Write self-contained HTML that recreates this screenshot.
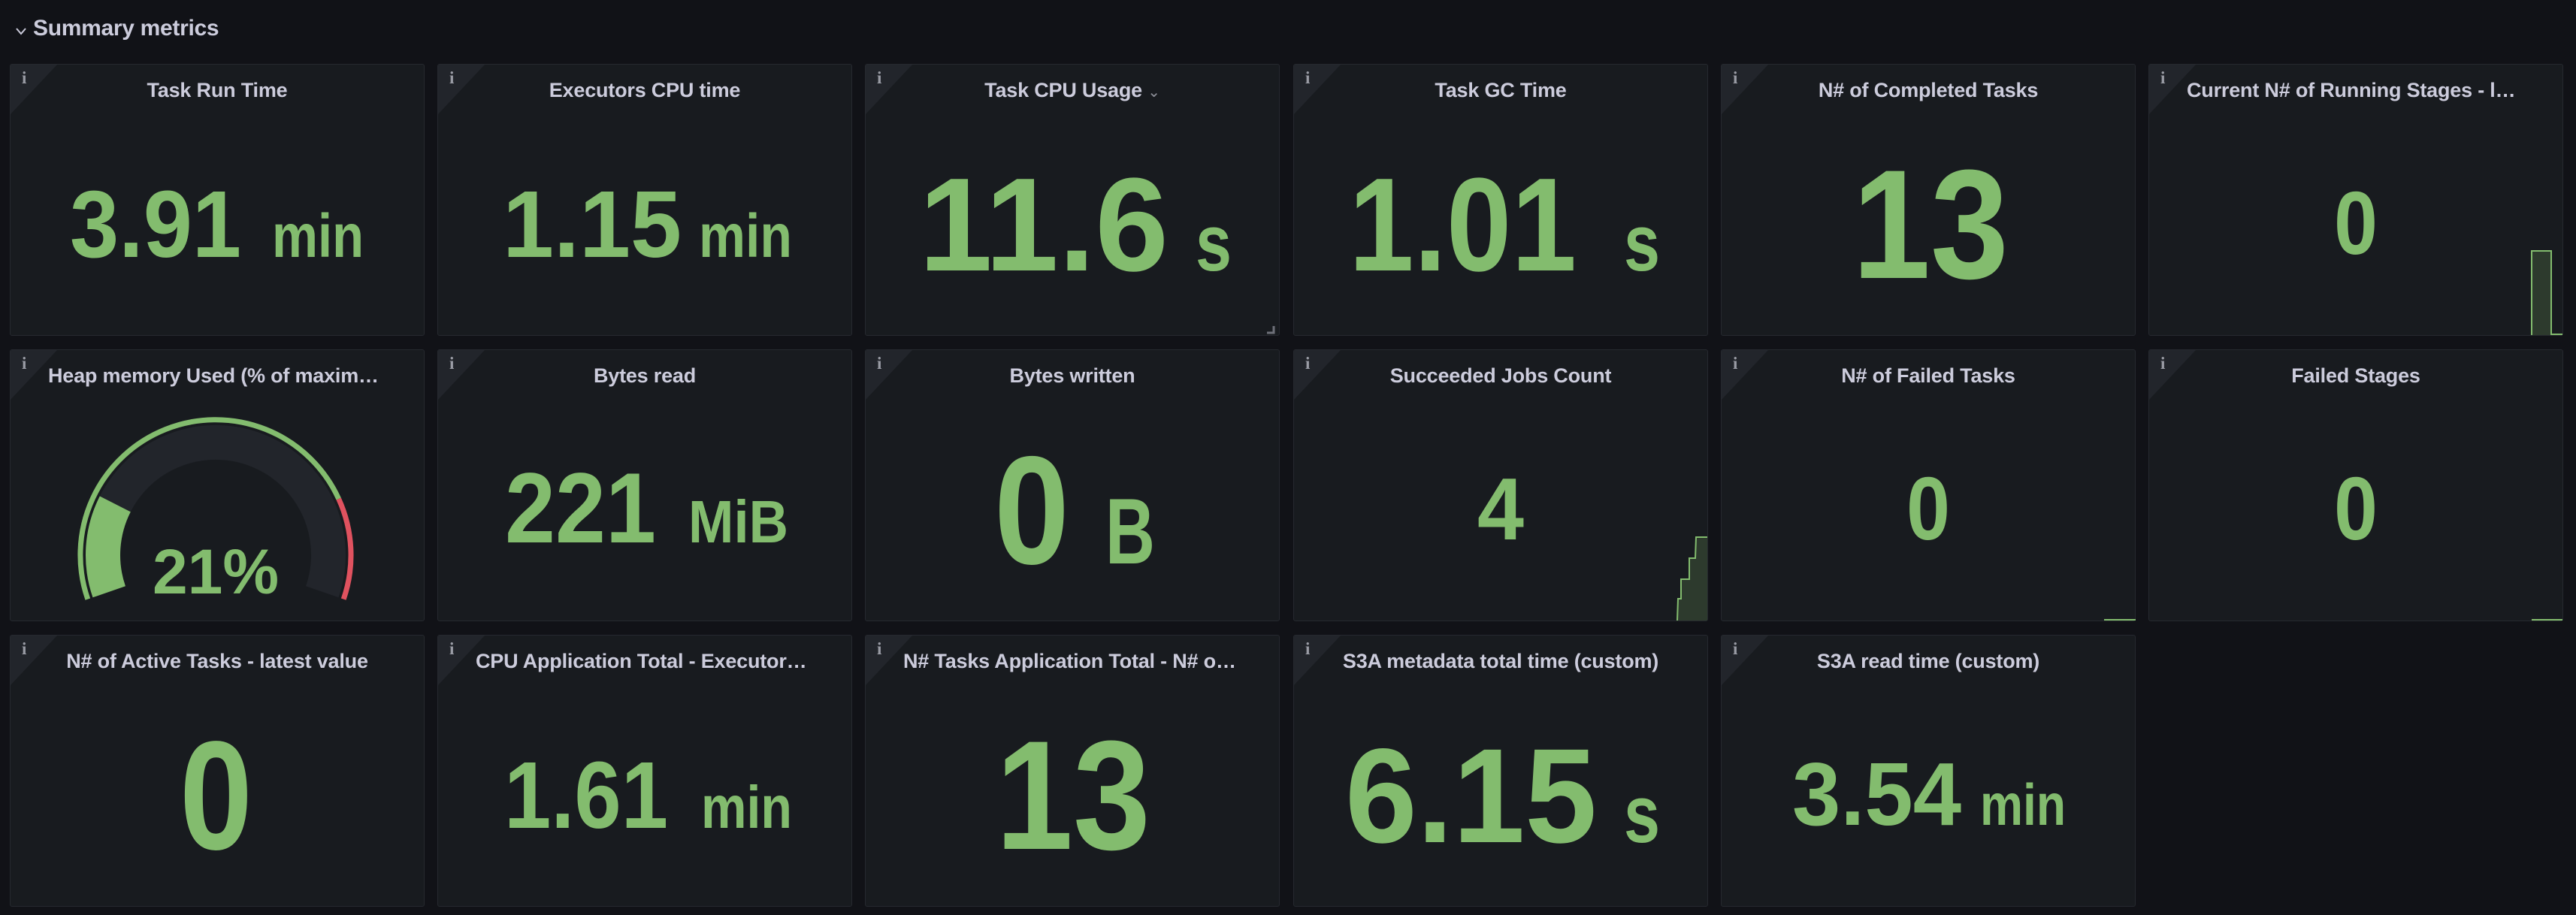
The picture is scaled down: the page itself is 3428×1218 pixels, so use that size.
<!DOCTYPE html>
<html><head><meta charset="utf-8">
<style>
*{box-sizing:border-box;margin:0;padding:0}
html,body{width:3428px;height:1218px;background:#111217;overflow:hidden;font-family:"Liberation Sans",sans-serif}
.hdr{position:absolute;left:44px;top:18px;font-size:30px;font-weight:bold;color:#ccccdc;line-height:40px;letter-spacing:-0.3px}
.p{position:absolute;width:552px;height:362px;background:#181b1f;border:1px solid #26292f;border-radius:3px;overflow:hidden}
.tri{position:absolute;left:0;top:0;width:62px;height:66px;background:#22252b;clip-path:polygon(0 0,100% 0,0 100%)}
.i{position:absolute;left:15px;top:5px;font-family:"Liberation Serif",serif;font-weight:bold;font-size:23px;color:#9a9ca5}
.t{position:absolute;left:50px;right:50px;top:17px;line-height:34px;font-size:27px;font-weight:600;color:#ccccdc;text-align:center;white-space:nowrap;overflow:hidden;text-overflow:ellipsis;letter-spacing:-0.2px}
svg.o{position:absolute;left:0;top:0}
svg.o text{font-family:"Liberation Sans",sans-serif;font-weight:bold;fill:#83bc6e}
</style></head><body>
<svg style="position:absolute;left:20px;top:36px" width="16" height="12" viewBox="0 0 16 12"><path d="M2 2 L8 9 L14 2" fill="none" stroke="#ccccdc" stroke-width="2"/></svg>
<div class="hdr">Summary metrics</div>

<div class="p" style="left:13px;top:85px"><div class="tri"></div><div class="i">i</div><div class="t">Task Run Time</div></div>
<div class="p" style="left:582px;top:85px"><div class="tri"></div><div class="i">i</div><div class="t">Executors CPU time</div></div>
<div class="p" style="left:1151px;top:85px"><div class="tri"></div><div class="i">i</div><div class="t" style="left:40px;right:40px">Task CPU Usage <span style="font-size:20px;color:#8e9099;font-weight:normal">&#8964;</span></div></div>
<div class="p" style="left:1721px;top:85px"><div class="tri"></div><div class="i">i</div><div class="t">Task GC Time</div></div>
<div class="p" style="left:2290px;top:85px"><div class="tri"></div><div class="i">i</div><div class="t">N# of Completed Tasks</div></div>
<div class="p" style="left:2859px;top:85px"><div class="tri"></div><div class="i">i</div><div class="t">Current N# of Running Stages - latest value</div></div>

<div class="p" style="left:13px;top:465px"><div class="tri"></div><div class="i">i</div><div class="t">Heap memory Used (% of maximum)</div></div>
<div class="p" style="left:582px;top:465px"><div class="tri"></div><div class="i">i</div><div class="t">Bytes read</div></div>
<div class="p" style="left:1151px;top:465px"><div class="tri"></div><div class="i">i</div><div class="t">Bytes written</div></div>
<div class="p" style="left:1721px;top:465px"><div class="tri"></div><div class="i">i</div><div class="t">Succeeded Jobs Count</div></div>
<div class="p" style="left:2290px;top:465px"><div class="tri"></div><div class="i">i</div><div class="t">N# of Failed Tasks</div></div>
<div class="p" style="left:2859px;top:465px"><div class="tri"></div><div class="i">i</div><div class="t">Failed Stages</div></div>

<div class="p" style="left:13px;top:845px"><div class="tri"></div><div class="i">i</div><div class="t">N# of Active Tasks - latest value</div></div>
<div class="p" style="left:582px;top:845px"><div class="tri"></div><div class="i">i</div><div class="t">CPU Application Total - Executors CPU time</div></div>
<div class="p" style="left:1151px;top:845px"><div class="tri"></div><div class="i">i</div><div class="t">N# Tasks Application Total - N# of tasks</div></div>
<div class="p" style="left:1721px;top:845px"><div class="tri"></div><div class="i">i</div><div class="t">S3A metadata total time (custom)</div></div>
<div class="p" style="left:2290px;top:845px"><div class="tri"></div><div class="i">i</div><div class="t">S3A read time (custom)</div></div>

<svg class="o" width="3428" height="1218" viewBox="0 0 3428 1218">
<path d="M1686 443 H1695 V434" fill="none" stroke="#6e7079" stroke-width="3"/>
<text x="93" y="342" font-size="126" textLength="228" lengthAdjust="spacingAndGlyphs">3.91</text>
<text x="362" y="342" font-size="82" textLength="122" lengthAdjust="spacingAndGlyphs">min</text>
<text x="669" y="342" font-size="126" textLength="238" lengthAdjust="spacingAndGlyphs">1.15</text>
<text x="930" y="342" font-size="82" textLength="124" lengthAdjust="spacingAndGlyphs">min</text>
<text x="1223" y="360" font-size="177" textLength="332" lengthAdjust="spacingAndGlyphs">11.6</text>
<text x="1591" y="360" font-size="107" textLength="48" lengthAdjust="spacingAndGlyphs">s</text>
<text x="1795" y="360" font-size="177" textLength="303" lengthAdjust="spacingAndGlyphs">1.01</text>
<text x="2161" y="360" font-size="107" textLength="48" lengthAdjust="spacingAndGlyphs">s</text>
<text x="2465" y="370" font-size="207" textLength="208" lengthAdjust="spacingAndGlyphs">13</text>
<text x="3106" y="338" font-size="119" textLength="58" lengthAdjust="spacingAndGlyphs">0</text>
<path d="M3369 446 V334 H3395 V446 Z" fill="#2d3a2d"/>
<path d="M3369 446 V334 H3395 V445 H3410" fill="none" stroke="#83bc6e" stroke-width="2"/>
<path d="M145.2 787.8 A150 150 0 1 1 428.8 787.8" fill="none" stroke="#22252b" stroke-width="46"/>
<path d="M145.2 787.8 A150 150 0 0 1 153.3 670.9" fill="none" stroke="#83bc6e" stroke-width="46"/>
<path d="M116.8 797.6 A180 180 0 0 1 450.7 664.1" fill="none" stroke="#83bc6e" stroke-width="7"/>
<path d="M450.7 664.1 A180 180 0 0 1 457.2 797.6" fill="none" stroke="#e0525f" stroke-width="7"/>
<text x="287" y="790" font-size="84" text-anchor="middle">21%</text>
<text x="672" y="722" font-size="133" textLength="201" lengthAdjust="spacingAndGlyphs">221</text>
<text x="916" y="722" font-size="80" textLength="133" lengthAdjust="spacingAndGlyphs">MiB</text>
<text x="1323" y="750" font-size="205" textLength="100" lengthAdjust="spacingAndGlyphs">0</text>
<text x="1471" y="750" font-size="124" textLength="66" lengthAdjust="spacingAndGlyphs">B</text>
<text x="1966" y="718" font-size="117" textLength="62" lengthAdjust="spacingAndGlyphs">4</text>
<path d="M2232 826 L2233 797 H2237 V771 H2248 V743 H2256 L2257 715 H2272 V826 Z" fill="#2d3a2d"/>
<path d="M2232 826 L2233 797 H2237 V771 H2248 V743 H2256 L2257 715 H2272" fill="none" stroke="#83bc6e" stroke-width="2"/>
<text x="2537" y="718" font-size="119" textLength="58" lengthAdjust="spacingAndGlyphs">0</text>
<path d="M2800 825 H2842" stroke="#83bc6e" stroke-width="2"/>
<text x="3106" y="718" font-size="119" textLength="58" lengthAdjust="spacingAndGlyphs">0</text>
<path d="M3369 825 H3410" stroke="#83bc6e" stroke-width="2"/>
<text x="239" y="1130" font-size="206" textLength="97" lengthAdjust="spacingAndGlyphs">0</text>
<text x="671" y="1102" font-size="126" textLength="218" lengthAdjust="spacingAndGlyphs">1.61</text>
<text x="933" y="1102" font-size="80" textLength="121" lengthAdjust="spacingAndGlyphs">min</text>
<text x="1325" y="1130" font-size="207" textLength="206" lengthAdjust="spacingAndGlyphs">13</text>
<text x="1790" y="1121" font-size="179" textLength="335" lengthAdjust="spacingAndGlyphs">6.15</text>
<text x="2161" y="1121" font-size="109" textLength="48" lengthAdjust="spacingAndGlyphs">s</text>
<text x="2385" y="1098" font-size="119" textLength="225" lengthAdjust="spacingAndGlyphs">3.54</text>
<text x="2635" y="1098" font-size="78" textLength="114" lengthAdjust="spacingAndGlyphs">min</text>
</svg>
</body></html>
